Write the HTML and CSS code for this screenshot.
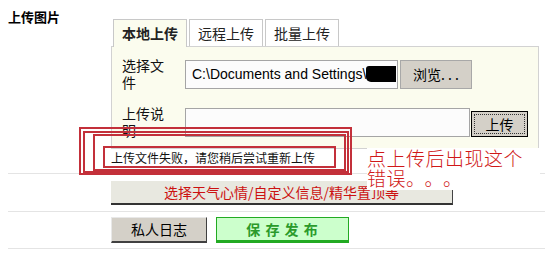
FILE: index.html
```html
<!DOCTYPE html>
<html>
<head>
<meta charset="utf-8">
<link rel="stylesheet" href="styles.css">
</head>
<body>
<div class="form">
  <div class="row row-upload">
    <div class="title">上传图片</div>
    <div class="content">
      <div class="tabs">
        <div class="tab active">本地上传</div>
        <div class="tab">远程上传</div>
        <div class="tab">批量上传</div>
      </div>
      <div class="panel">
        <div class="field field-file">
          <div class="label">选择文件</div>
          <div class="input input-file">C:\Documents and Settings\<span class="scribble"></span></div>
          <div class="btn btn-browse">浏览. . .</div>
        </div>
        <div class="field field-desc">
          <div class="label">上传说明</div>
          <div class="input input-desc"></div>
          <div class="btn btn-upload"><span>上传</span></div>
        </div>
      </div>
      <div class="error">上传文件失败，请您稍后尝试重新上传</div>
    </div>
  </div>
  <div class="row row-extra">
    <div class="btn-extra">选择天气心情/自定义信息/精华置顶等</div>
  </div>
  <div class="row row-actions">
    <div class="btn-private">私人日志</div>
    <div class="btn-save">保 存 发 布</div>
  </div>
</div>

<div class="mark m1"></div>
<div class="mark m2"></div>
<div class="mark m3"></div>
<div class="mark m4"></div>
<div class="note">点上传后出现这个<br>错误<span class="dots">。。。</span></div>
</body>
</html>
```

FILE: styles.css
```css
html, body {
  margin: 0;
  padding: 0;
  background: #ffffff;
}
body {
  font-family: "Noto Sans CJK SC", "Liberation Sans", sans-serif;
  font-size: 13px;
  color: #000;
  position: relative;
  width: 555px;
  height: 257px;
  overflow: hidden;
}
.form {
  margin-left: 8px;
  width: 537px;
}
.row {
  border-bottom: 1px solid #e4e4e4;
}
.row-upload {
  display: grid;
  grid-template-columns: 103px 1fr;
  padding-top: 7px;
  height: 166px;
}
.title {
  font-weight: bold;
  font-size: 13px;
  line-height: 19px;
}
.content {
  padding-top: 12px;
  margin-right: 6px;
}
.tabs {
  display: flex;
  gap: 2px;
  margin-left: 2px;
  height: 27px;
}
.tab {
  border: 1px solid #c8c8c8;
  border-bottom: none;
  background: #fff;
  font-size: 14px;
  line-height: 26px;
  padding: 0 8px 0 8px;
  color: #222;
}
.tab.active {
  background: #fbfcee;
  font-weight: bold;
  position: relative;
  margin-bottom: -1px;
  z-index: 1;
}
.panel {
  border: 1px solid #d2d2d2;
  background: #fbfcee;
  height: 103px;
  box-sizing: border-box;
  padding: 10px 0 0 10px;
}
.field {
  display: flex;
  align-items: flex-start;
}
.label {
  width: 46px;
  font-size: 14px;
  line-height: 17px;
  margin-right: 17px;
  color: #111;
}
.input {
  box-sizing: border-box;
  height: 29px;
  border: 1px solid #a5a5a5;
  background: #fcfcfc;
  margin-top: 3px;
  font-family: "Liberation Sans", sans-serif;
  font-size: 14px;
  line-height: 27px;
  padding-left: 6px;
  white-space: nowrap;
  overflow: hidden;
}
.input-file {
  width: 213px;
}
.scribble {
  display: inline-block;
  width: 30px;
  height: 16px;
  background: #000;
  vertical-align: -3px;
  border-radius: 3px 0 0 5px;
}
.btn {
  box-sizing: border-box;
  background: #d4d0c8;
  font-size: 14px;
  text-align: center;
}
.btn-browse {
  width: 72px;
  height: 29px;
  margin-top: 3px;
  margin-left: 2px;
  border: 1px solid #a8a8a8;
  line-height: 27px;
}
.field-desc {
  margin-top: 14px;
}
.input-desc {
  width: 285px;
}
.btn-upload {
  width: 57px;
  height: 26px;
  margin-top: 6px;
  margin-left: 1px;
  border: 1px solid #000;
  padding: 2px;
}
.btn-upload span {
  display: block;
  border: 1px dotted #333;
  line-height: 18px;
}
.error {
  font-size: 12px;
  line-height: 16px;
  margin-top: 1px;
  color: #111;
}
.row-extra {
  padding: 7px 0 6px 103px;
}
.btn-extra {
  box-sizing: border-box;
  width: 342px;
  height: 24px;
  background: #e8e8e0;
  border-right: 1px solid #444;
  border-bottom: 2px solid #333;
  color: #cc1111;
  font-size: 14px;
  line-height: 22px;
  text-align: center;
}
.row-actions {
  display: flex;
  gap: 9px;
  padding: 5px 0 5px 103px;
}
.btn-private {
  box-sizing: border-box;
  width: 96px;
  height: 26px;
  background: #d4d0c8;
  border-top: 1px solid #e8e8e8;
  border-left: 1px solid #e8e8e8;
  border-right: 1px solid #404040;
  border-bottom: 2px solid #404040;
  font-size: 14px;
  line-height: 23px;
  text-align: center;
}
.btn-save {
  box-sizing: border-box;
  width: 133px;
  height: 26px;
  background: #ccffcc;
  border: 1px solid #22aa22;
  border-bottom: 3px solid #22aa22;
  color: #2a9a2a;
  font-weight: bold;
  font-size: 14px;
  line-height: 22px;
  text-align: center;
  letter-spacing: 1px;
}
.mark {
  position: absolute;
  box-sizing: border-box;
  border: 2px solid #c3303a;
}
.m1 { left: 79px; top: 127px; width: 273px; height: 48px; }
.m2 { left: 83px; top: 131px; width: 266px; height: 42px; }
.m3 { left: 93px; top: 134px; width: 253px; height: 37px; }
.m4 { left: 103px; top: 146px; width: 233px; height: 22px; }
.note {
  position: absolute;
  left: 367px;
  top: 148px;
  width: 173px;
  height: 42px;
  background: #fff;
  color: #d01818;
  font-size: 19px;
  line-height: 20px;
  letter-spacing: 0.5px;
  font-weight: 300;
}
.dots {
  letter-spacing: 9px;
}
```
